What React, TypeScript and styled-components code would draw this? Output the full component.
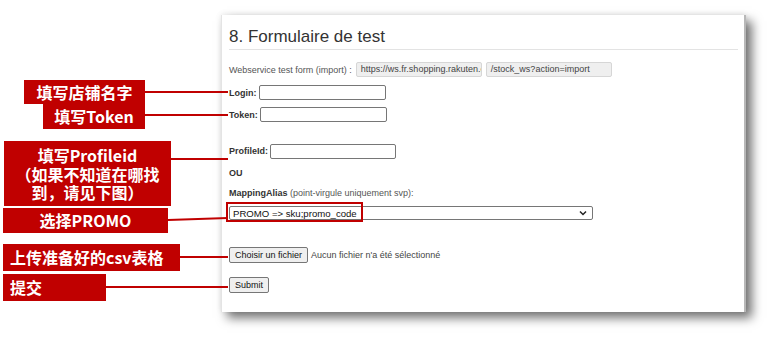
import React from "react";
import styled, { createGlobalStyle } from "styled-components";

const RED = "#c00000";

const GlobalStyle = createGlobalStyle`
  html, body { margin: 0; padding: 0; background: #fff; }
  body { width: 778px; height: 343px; overflow: hidden; }
  * { box-sizing: border-box; }
`;

const Page = styled.div`
  display: flex;
  align-items: flex-start;
  width: 778px;
  height: 343px;
  padding-top: 15px;
`;

const Annotations = styled.div`
  position: relative;
  z-index: 2;
  flex: none;
  width: 228px;
  padding-top: 65px;
  display: flex;
  flex-direction: column;
`;

const Callout = styled.div<{ $gap?: number }>`
  display: flex;
  align-items: flex-start;
  margin-top: ${(p) => p.$gap ?? 0}px;
`;

const Tag = styled.div<{ $left: number; $width: number; $height: number; $align?: string; $pad?: number }>`
  flex: none;
  margin-left: ${(p) => p.$left}px;
  width: ${(p) => p.$width}px;
  height: ${(p) => p.$height}px;
  background: ${RED};
  color: #fff;
  font-family: "Noto Sans CJK SC", "Noto Sans", sans-serif;
  font-weight: 700;
  font-size: 16px;
  line-height: ${(p) => p.$height}px;
  text-align: ${(p) => p.$align ?? "center"};
  padding-left: ${(p) => p.$pad ?? 0}px;
  white-space: nowrap;
`;

const MultiTag = styled(Tag)`
  line-height: 18.5px;
  padding-top: 5px;
`;

const Leader = styled.div<{ $offset: number; $tilt?: number }>`
  flex: 1;
  height: 2px;
  margin-top: ${(p) => p.$offset}px;
  background: ${RED};
  transform-origin: left center;
  transform: rotate(${(p) => p.$tilt ?? 0}deg);
`;

const Panel = styled.div`
  flex: none;
  margin-left: -7px;
  width: 525px;
  height: 297px;
  background: #fff;
  border-left: 1px solid #e4e4e4;
  border-right: 2px solid #b8b8b8;
  box-shadow: 6px 6px 10px rgba(0, 0, 0, 0.55), 0 -1px 6px rgba(0, 0, 0, 0.08);
  padding: 0 6px 0 7px;
  font-family: "Liberation Sans", Arial, sans-serif;
  font-size: 9px;
  color: #333;
  display: flex;
  flex-direction: column;
`;

const Title = styled.h3`
  margin: 0;
  padding-top: 11px;
  height: 35px;
  font-family: "Liberation Sans", Arial, sans-serif;
  font-weight: 400;
  font-size: 17px;
  line-height: 22px;
  color: #333;
  border-bottom: 1px solid #e3e3e3;
`;

const Row = styled.div<{ $top: number; $height?: number }>`
  display: flex;
  align-items: center;
  gap: 2px;
  margin-top: ${(p) => p.$top}px;
  height: ${(p) => p.$height ?? 15}px;
  white-space: nowrap;
`;

const Label = styled.span`
  font-weight: 700;
  color: #333;
`;

const Hint = styled.span`
  color: #555;
  font-weight: 400;
`;

const ReadOnly = styled.div`
  width: 126px;
  height: 15px;
  margin-left: 2px;
  padding: 0 4px;
  background: #efefef;
  border: 1px solid #d6d6d6;
  border-radius: 2px;
  color: #444;
  line-height: 13px;
  overflow: hidden;
  white-space: nowrap;
`;

const TextField = styled.div<{ $width: number }>`
  width: ${(p) => p.$width}px;
  height: 15px;
  background: #fff;
  border: 1px solid #767676;
  border-radius: 2px;
`;

const SelectWrap = styled.div`
  position: relative;
`;

const Select = styled.div`
  width: 364px;
  height: 14px;
  border: 1px solid #767676;
  border-radius: 2px;
  background: #fff;
  display: flex;
  align-items: center;
  justify-content: space-between;
  padding: 0 5px 0 3px;
  font-size: 9.6px;
  color: #111;
`;

const Highlight = styled.div`
  position: absolute;
  left: -3px;
  top: -4px;
  width: 137px;
  height: 20px;
  border: 2px solid ${RED};
  pointer-events: none;
`;

const Button = styled.div`
  height: 16px;
  padding: 0 5px;
  background: #efefef;
  border: 1px solid #767676;
  border-radius: 2px;
  color: #111;
  font-size: 9px;
  line-height: 14px;
`;

const NoFile = styled.span`
  margin-left: 1px;
  color: #444;
`;

export default function App() {
  return (
    <>
      <GlobalStyle />
      <Page>
        <Annotations>
          <Callout>
            <Tag $left={24} $width={121} $height={24}>填写店铺名字</Tag>
            <Leader $offset={11} />
          </Callout>
          <Callout>
            <Tag $left={43} $width={102} $height={25}>填写Token</Tag>
            <Leader $offset={10} />
          </Callout>
          <Callout $gap={12}>
            <MultiTag $left={4} $width={167} $height={65}>
              填写Profileid
              <br />
              （如果不知道在哪找
              <br />
              到，请见下图）
            </MultiTag>
            <Leader $offset={17} />
          </Callout>
          <Callout $gap={2}>
            <Tag $left={3} $width={165} $height={25}>选择PROMO</Tag>
            <Leader $offset={11} $tilt={-1.8} />
          </Callout>
          <Callout $gap={11}>
            <Tag $left={3} $width={177} $height={27} $align="left" $pad={7}>上传准备好的csv表格</Tag>
            <Leader $offset={12} />
          </Callout>
          <Callout $gap={3}>
            <Tag $left={3} $width={103} $height={27} $align="left" $pad={7}>提交</Tag>
            <Leader $offset={12} />
          </Callout>
        </Annotations>

        <Panel>
          <Title>8. Formulaire de test</Title>
          <Row $top={12}>
            <Hint>Webservice test form (import) :</Hint>
            <ReadOnly>https://ws.fr.shopping.rakuten.com</ReadOnly>
            <ReadOnly>/stock_ws?action=import</ReadOnly>
          </Row>
          <Row $top={8}>
            <Label>Login:</Label>
            <TextField $width={127} />
          </Row>
          <Row $top={7}>
            <Label>Token:</Label>
            <TextField $width={127} />
          </Row>
          <Row $top={22} $height={14}>
            <Label>ProfileId:</Label>
            <TextField $width={126} />
          </Row>
          <Row $top={7}>
            <Label>OU</Label>
          </Row>
          <Row $top={5}>
            <Label>
              MappingAlias <Hint>(point-virgule uniquement svp):</Hint>
            </Label>
          </Row>
          <Row $top={6} $height={14}>
            <SelectWrap>
              <Select>
                <span>PROMO =&gt; sku;promo_code</span>
                <svg width="8" height="6" viewBox="0 0 8 6">
                  <path d="M1 1.5 L4 4.5 L7 1.5" fill="none" stroke="#222" strokeWidth="1.5" />
                </svg>
              </Select>
              <Highlight />
            </SelectWrap>
          </Row>
          <Row $top={27} $height={16}>
            <Button>Choisir un fichier</Button>
            <NoFile>Aucun fichier n'a été sélectionné</NoFile>
          </Row>
          <Row $top={14} $height={16}>
            <Button>Submit</Button>
          </Row>
        </Panel>
      </Page>
    </>
  );
}
